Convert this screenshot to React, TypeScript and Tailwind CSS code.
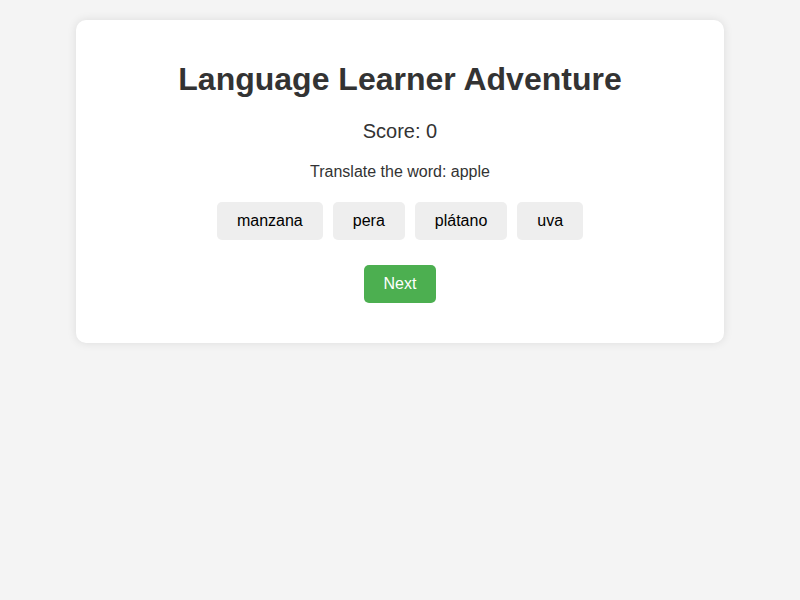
import React, { useState } from 'react';

const OPTIONS = ['manzana', 'pera', 'plátano', 'uva'];

export default function App() {
  const [score, setScore] = useState(0);

  return (
    <div className="min-h-screen bg-[#f4f4f4] pt-[20px] font-['Liberation_Sans',Arial,sans-serif] text-[#333] leading-[normal]">
      <div className="mx-auto w-[648px] rounded-[10px] bg-white py-[20px] text-center shadow-[0_0_10px_rgba(0,0,0,0.1)]">
        <h1 className="my-[21.44px] text-[32px] font-bold">Language Learner Adventure</h1>
        <div className="text-[20px]">Score: {score}</div>
        <p className="mt-[20px] text-[16px]">Translate the word: apple</p>
        <div className="mt-[16px] flex justify-center">
          {OPTIONS.map((opt) => (
            <button
              key={opt}
              onClick={() => opt === 'manzana' && setScore(score + 1)}
              className="m-[5px] rounded-[5px] bg-[#eee] px-[20px] py-[10px] text-[16px] text-black"
            >
              {opt}
            </button>
          ))}
        </div>
        <div className="mt-[20px] mb-[20px]">
          <button className="rounded-[5px] bg-[#4caf50] px-[20px] py-[10px] text-[16px] text-white">
            Next
          </button>
        </div>
      </div>
    </div>
  );
}
